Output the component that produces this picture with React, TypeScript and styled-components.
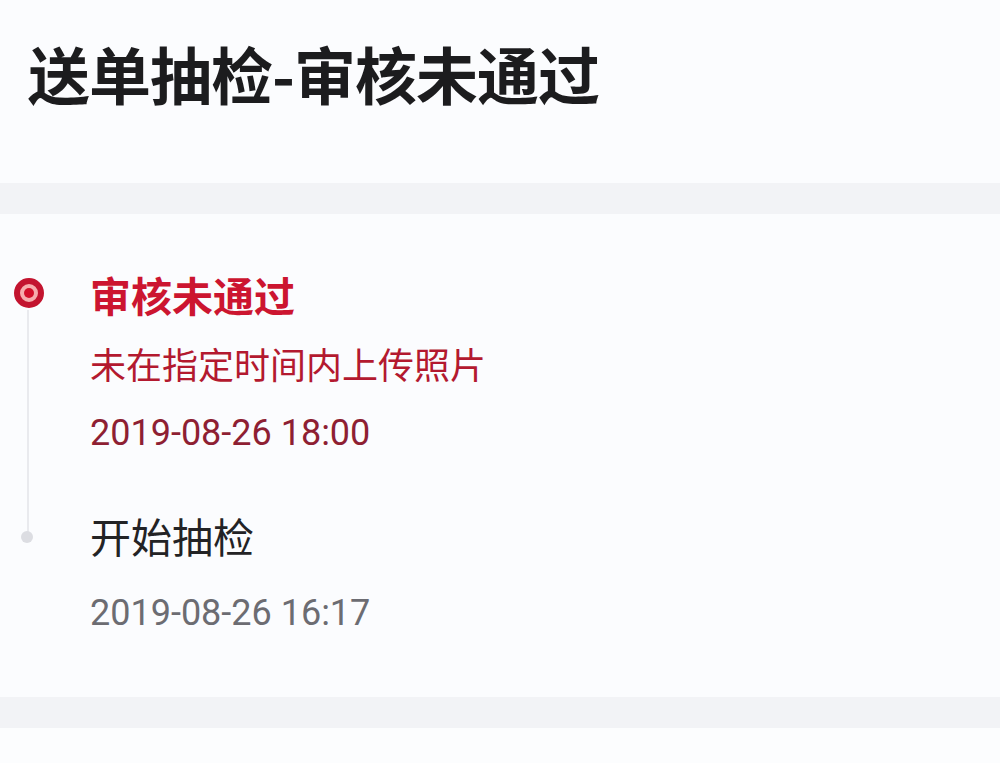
import styled, { createGlobalStyle } from "styled-components";

const GlobalStyle = createGlobalStyle`
  body {
    margin: 0;
    background: #fbfcfe;
    font-family: Roboto, "Noto Sans CJK SC", sans-serif;
  }
`;

const Page = styled.div`
  width: 1000px;
  height: 763px;
  overflow: hidden;
  background: #fbfcfe;
  display: flex;
  flex-direction: column;
`;

const Header = styled.div`
  height: 183px;
  padding: 0 28px;
  display: flex;
  align-items: flex-start;
  box-sizing: border-box;
`;

const Title = styled.h1`
  margin: 36px 0 0;
  font-size: 62px;
  line-height: 74px;
  font-weight: 700;
  color: #1c1c1e;
  font-family: "Noto Sans CJK SC", sans-serif;
  letter-spacing: -1px;
`;

const Band = styled.div`
  height: 31px;
  background: #f2f3f6;
  flex-shrink: 0;
`;

const Timeline = styled.div`
  height: 483px;
  padding-top: 50px;
  box-sizing: border-box;
  display: flex;
  flex-direction: column;
  gap: 48px;
`;

const Item = styled.div`
  display: grid;
  grid-template-columns: 90px 1fr;
`;

const Rail = styled.div<{ $last?: boolean }>`
  position: relative;
  display: flex;
  justify-content: center;
  width: 58px;

  &::after {
    content: "";
    display: ${(p) => (p.$last ? "none" : "block")};
    position: absolute;
    left: 27px;
    top: 46px;
    bottom: -78px;
    width: 2px;
    background: #e9eaee;
  }
`;

const Target = styled.span`
  margin-top: 14px;
  width: 30px;
  height: 30px;
  box-sizing: border-box;
  border-radius: 50%;
  border: 6px solid #c3142f;
  background: #f6adad;
  display: flex;
  align-items: center;
  justify-content: center;
  z-index: 1;

  &::before {
    content: "";
    width: 10px;
    height: 10px;
    border-radius: 50%;
    background: #d3102a;
  }
`;

const Dot = styled.span`
  margin-top: 26px;
  margin-right: 4px;
  width: 12px;
  height: 12px;
  border-radius: 50%;
  background: #dcdde2;
  z-index: 1;
`;

const Content = styled.div`
  display: flex;
  flex-direction: column;
`;

const ItemTitle = styled.div<{ $active?: boolean }>`
  font-size: 41px;
  line-height: 60px;
  font-weight: ${(p) => (p.$active ? 700 : 400)};
  color: ${(p) => (p.$active ? "#cc1530" : "#232325")};
  font-family: "Noto Sans CJK SC", sans-serif;
`;

const Desc = styled.div`
  margin-top: 15px;
  font-size: 36px;
  line-height: 48px;
  color: #b3192f;
  font-family: "Noto Sans CJK SC", sans-serif;
`;

const Time = styled.div<{ $active?: boolean }>`
  margin-top: ${(p) => (p.$active ? 22 : 24)}px;
  font-size: 36px;
  line-height: 48px;
  font-family: Roboto, sans-serif;
  color: ${(p) => (p.$active ? "#8e1f33" : "#6c6c72")};
`;

const Bottom = styled.div`
  flex: 1;
  background: #fcfdfe;
`;

export default function App() {
  return (
    <Page>
      <GlobalStyle />
      <Header>
        <Title>送单抽检-审核未通过</Title>
      </Header>
      <Band />
      <Timeline>
        <Item>
          <Rail>
            <Target />
          </Rail>
          <Content>
            <ItemTitle $active>审核未通过</ItemTitle>
            <Desc>未在指定时间内上传照片</Desc>
            <Time $active>2019-08-26 18:00</Time>
          </Content>
        </Item>
        <Item>
          <Rail $last>
            <Dot />
          </Rail>
          <Content>
            <ItemTitle>开始抽检</ItemTitle>
            <Time>2019-08-26 16:17</Time>
          </Content>
        </Item>
      </Timeline>
      <Band />
      <Bottom />
    </Page>
  );
}
